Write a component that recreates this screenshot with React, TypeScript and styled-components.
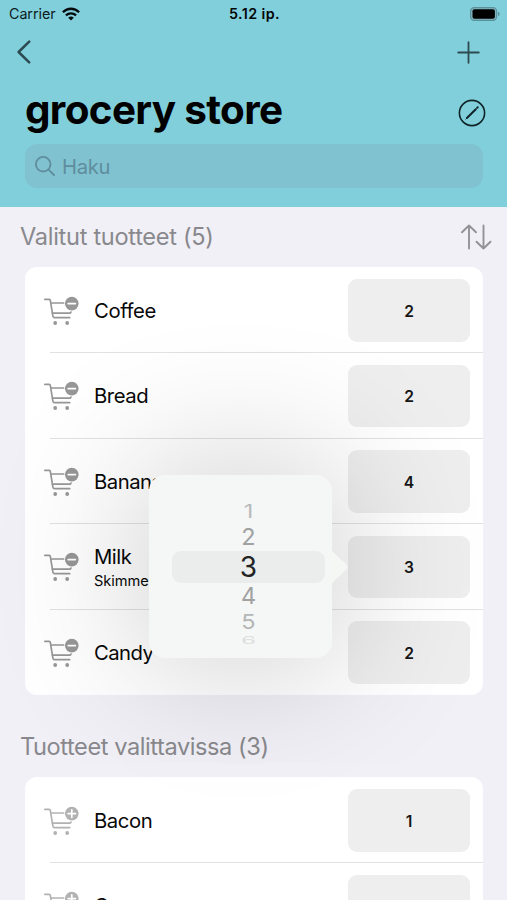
import React from "react";
import styled, { createGlobalStyle } from "styled-components";

const GlobalStyle = createGlobalStyle`
  * { box-sizing: border-box; }
  html, body { margin: 0; padding: 0; background: #f1f0f6; overflow: hidden; }
  body { font-family: Inter, "Liberation Sans", sans-serif; color: #080808; }
  svg { display: block; flex: none; }
`;

const Screen = styled.div`
  position: relative;
  width: 507px;
  height: 900px;
  overflow: hidden;
  background: #f1f0f6;
`;

const Header = styled.header`
  position: relative;
  z-index: 2;
  height: 206.5px;
  background: #82cfdc;
`;

const StatusBar = styled.div`
  display: grid;
  grid-template-columns: 1fr auto 1fr;
  align-items: center;
  height: 27px;
  padding: 0 7px 0 9px;
  font-size: 14.3px;
  line-height: 27px;
  color: #0b1b1e;
`;

const Carrier = styled.div`
  display: flex;
  align-items: center;
  gap: 6px;
  letter-spacing: -0.05px;
`;

const Clock = styled.div`
  font-weight: 600;
  letter-spacing: 0.4px;
  color: #020606;
`;

const BatterySlot = styled.div`
  display: flex;
  justify-content: flex-end;
`;

const NavBar = styled.nav`
  display: flex;
  align-items: center;
  justify-content: space-between;
  height: 50px;
  padding: 0 27px 0 16px;
`;

const TitleRow = styled.div`
  display: flex;
  align-items: flex-start;
  justify-content: space-between;
  height: 67px;
  padding: 7px 21.5px 0 25px;

  svg { margin-top: 15px; }
`;

const Title = styled.h1`
  margin: 1px 0 0;
  font-size: 40.4px;
  line-height: 50px;
  font-weight: 700;
  letter-spacing: -0.65px;
  color: #000;
`;

const SearchField = styled.div`
  display: flex;
  align-items: center;
  gap: 6px;
  height: 44px;
  margin: 0 24px 0 25px;
  padding-left: 9px;
  border-radius: 12px;
  background: #80c2d0;
  color: #5f8d9e;
  font-size: 20.2px;
  letter-spacing: -0.3px;
`;

const SectionHeader = styled.div`
  display: flex;
  align-items: center;
  justify-content: space-between;
  height: 60.5px;
  padding: 0 15px 0 20px;
  color: #89898d;
`;

const SectionTitle = styled.h2<{ $spacing: number }>`
  margin: 0;
  font-size: 23.6px;
  font-weight: 400;
  line-height: 30px;
  letter-spacing: ${(p) => p.$spacing}px;
`;

const Card = styled.section`
  margin: 0 24px 22px 25px;
  border-radius: 12px;
  background: #fff;
  overflow: hidden;
`;

const Row = styled.div`
  position: relative;
  display: flex;
  align-items: center;
  height: 85.5px;
  padding: 1px 13px 0 19px;

  & + &::before {
    content: "";
    position: absolute;
    top: -0.5px;
    left: 25px;
    right: 0;
    height: 1px;
    background: #e2e2e4;
  }
`;

const Labels = styled.div`
  flex: 1;
  padding-left: 15px;
`;

const Name = styled.div<{ $spacing: number }>`
  font-size: 20.3px;
  line-height: 27px;
  letter-spacing: ${(p) => p.$spacing}px;
`;

const Detail = styled.div`
  font-size: 14.6px;
  line-height: 20px;
  margin-top: 1px;
  letter-spacing: -0.05px;
`;

const Quantity = styled.div`
  display: flex;
  align-items: center;
  justify-content: center;
  width: 122px;
  height: 62.5px;
  padding-top: 1.5px;
  border-radius: 9px;
  background: #eeeeee;
  font-size: 15.6px;
  font-weight: 600;
  color: #161616;
`;

const Popover = styled.div`
  position: absolute;
  z-index: 1;
  left: 149px;
  top: 475px;
  width: 183px;
  height: 183px;
  padding: 24px 7px 0 23px;
  border-radius: 16px;
  background: #f5f6f6;
  box-shadow: 0 0 155px rgba(0, 0, 0, 0.24);
`;

const Arrow = styled.svg`
  position: absolute;
  left: 182px;
  top: 73px;
`;

const WheelItem = styled.div<{ $h: number; $tone: string; $squash: number; $selected?: boolean }>`
  display: flex;
  align-items: center;
  justify-content: center;
  height: ${(p) => p.$h}px;
  border-radius: 9px;
  background: ${(p) => (p.$selected ? "#ebecec" : "transparent")};
  color: ${(p) => p.$tone};
  font-size: ${(p) => (p.$selected ? 28 : 23.5)}px;
  font-weight: 400;
  line-height: 1;

  span {
    transform: scaleY(${(p) => p.$squash});
  }
`;

const CartIcon = ({ kind }: { kind: "minus" | "plus" }) => {
  const tone = kind === "minus" ? "#979797" : "#b2b2b2";
  return (
    <svg width="35" height="29" viewBox="0 0 35 29" fill="none" stroke={tone} strokeWidth="1.7" strokeLinecap="round" strokeLinejoin="round">
      <path d="M0.8 3.4H5.2Q6.1 3.4 6.3 4.3L8.9 20.1Q9.2 21.7 10.6 21.7H25.7" />
      <path d="M7.4 7H19.6M8.5 17.2H25.2Q26.7 17.2 27 16" />
      <circle cx="11.2" cy="27" r="1.9" fill={tone} stroke="none" />
      <circle cx="23.2" cy="27" r="1.9" fill={tone} stroke="none" />
      <circle cx="27.8" cy="7.6" r="6.8" fill={tone} stroke="none" />
      <path d={kind === "minus" ? "M24.2 7.6H31.4" : "M24.1 7.6H31.5M27.8 3.9V11.3"} stroke="#fff" strokeWidth="1.7" />
    </svg>
  );
};

interface Item {
  name: string;
  detail?: string;
  qty?: number;
  spacing: number;
}

const selected: Item[] = [
  { name: "Coffee", qty: 2, spacing: -0.4 },
  { name: "Bread", qty: 2, spacing: -0.45 },
  { name: "Banana", qty: 4, spacing: -0.5 },
  { name: "Milk", detail: "Skimmed", qty: 3, spacing: -0.5 },
  { name: "Candy", qty: 2, spacing: -0.55 },
];

const available: Item[] = [
  { name: "Bacon", qty: 1, spacing: -0.4 },
  { name: "Cream", spacing: -0.4 },
];

const wheel = [
  { n: 1, h: 24.5, tone: "#b9baba", squash: 0.78 },
  { n: 2, h: 27, tone: "#a0a1a1", squash: 1 },
  { n: 3, h: 32.5, tone: "#232323", squash: 1 },
  { n: 4, h: 26, tone: "#a0a1a1", squash: 0.98 },
  { n: 5, h: 25.5, tone: "#b4b5b5", squash: 0.84 },
  { n: 6, h: 11.5, tone: "#dcdddd", squash: 0.42 },
];

const ItemList = ({ items, kind }: { items: Item[]; kind: "minus" | "plus" }) => (
  <Card>
    {items.map((item) => (
      <Row key={item.name}>
        <CartIcon kind={kind} />
        <Labels>
          <Name $spacing={item.spacing}>{item.name}</Name>
          {item.detail && <Detail>{item.detail}</Detail>}
        </Labels>
        <Quantity>{item.qty}</Quantity>
      </Row>
    ))}
  </Card>
);

export default function App() {
  return (
    <Screen>
      <GlobalStyle />
      <Header>
        <StatusBar>
          <Carrier>
            Carrier
            <svg width="18" height="14" viewBox="0 0 18 14" fill="none" stroke="#050b0c" strokeWidth="2.3">
              <path d="M0.9 5.2C5.5 0.6 12.5 0.6 17.1 5.2" />
              <path d="M3.9 8.4C6.8 5.6 11.2 5.6 14.1 8.4" />
              <path d="M9 13.5L6.2 10.7Q9 8.4 11.8 10.7Z" fill="#050b0c" stroke="none" />
            </svg>
          </Carrier>
          <Clock>5.12 ip.</Clock>
          <BatterySlot>
            <svg width="30" height="14" viewBox="0 0 30 14">
              <rect x="0.6" y="0.6" width="26" height="12.8" rx="3.6" fill="#82b4be" stroke="#5b919a" strokeWidth="1.2" />
              <rect x="2.5" y="2.3" width="22.4" height="9.4" rx="2" fill="#000" />
              <path d="M28 4.8Q29.7 5.4 29.7 7T28 9.2Z" fill="#5b919a" />
            </svg>
          </BatterySlot>
        </StatusBar>
        <NavBar>
          <svg width="16" height="24" viewBox="0 0 16 24" fill="none" stroke="#2c4b51" strokeWidth="2.5" strokeLinecap="round" strokeLinejoin="round">
            <path d="M13.2 1.7L2.6 12L13.2 22.3" />
          </svg>
          <svg width="23" height="23" viewBox="0 0 23 23" fill="none" stroke="#2c4b51" strokeWidth="1.8" strokeLinecap="round">
            <path d="M11.5 1.2V21.8M1.2 11.5H21.8" />
          </svg>
        </NavBar>
        <TitleRow>
          <Title>grocery store</Title>
          <svg width="28" height="28" viewBox="0 0 28 28" fill="none" stroke="#0e2428" strokeLinecap="round">
            <circle cx="14" cy="14" r="12.6" strokeWidth="1.6" />
            <path d="M8.9 19L17.8 10.2" strokeWidth="2" />
            <path d="M19.1 8.9L19.7 8.3" strokeWidth="2" />
            <path d="M7.9 20.1L9 19" strokeWidth="1" />
          </svg>
        </TitleRow>
        <SearchField>
          <svg width="22" height="22" viewBox="0 0 22 22" fill="none" stroke="#5f8d9e" strokeWidth="1.8" strokeLinecap="round">
            <circle cx="9.2" cy="9.2" r="7.3" />
            <path d="M14.6 14.6L20 20" />
          </svg>
          Haku
        </SearchField>
      </Header>

      <SectionHeader>
        <SectionTitle $spacing={-0.3}>Valitut tuotteet (5)</SectionTitle>
        <svg width="32" height="26" viewBox="0 0 32 26" fill="none" stroke="#929297" strokeWidth="1.9" strokeLinecap="round" strokeLinejoin="round">
          <path d="M9 24.5V1.5M2 8.3L9 1.5L16 8.3" />
          <path d="M23.5 1.5V24.5M16.5 17.7L23.5 24.5L30.5 17.7" />
        </svg>
      </SectionHeader>
      <ItemList items={selected} kind="minus" />
      <SectionHeader>
        <SectionTitle $spacing={-0.43}>Tuotteet valittavissa (3)</SectionTitle>
      </SectionHeader>
      <ItemList items={available} kind="plus" />

      <Popover>
        {wheel.map((w) => (
          <WheelItem key={w.n} $h={w.h} $tone={w.tone} $squash={w.squash} $selected={w.n === 3}>
            <span>{w.n}</span>
          </WheelItem>
        ))}
        <Arrow width="18" height="38" viewBox="0 0 18 38">
          <path d="M0 0C1 2.6 2 4 3.8 5.6L15.8 17Q17.6 19 15.8 21L3.8 32.4C2 34 1 35.4 0 38Z" fill="#f5f7f5" />
        </Arrow>
      </Popover>
    </Screen>
  );
}
